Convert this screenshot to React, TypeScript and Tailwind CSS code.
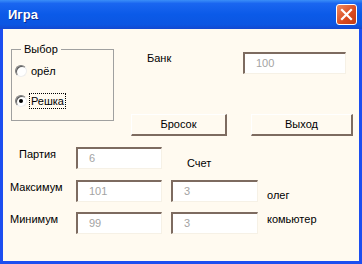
import React from "react";

const font = { fontFamily: '"Liberation Sans", Arial, sans-serif' };

function Field({ value, w }: { value: string; w: string }) {
  return (
    <div
      className={`${w} h-[22px] flex items-center pl-[11px] bg-white border-t-2 border-l-2 border-t-[#7d6b60] border-l-[#7d6b60] border-b border-r border-b-[#f6f1e6] border-r-[#f6f1e6] text-[11px] text-[#a3a3a3]`}
    >
      {value}
    </div>
  );
}

function Btn({ label, w }: { label: string; w: string }) {
  return (
    <button
      className={`${w} h-[22px] flex items-center justify-center bg-[#fffaf0] border-t border-l border-t-white border-l-white border-b-2 border-r-2 border-b-[#7d6b60] border-r-[#7d6b60] text-[11px] text-black`}
    >
      {label}
    </button>
  );
}

function Radio({ checked }: { checked?: boolean }) {
  return (
    <span className="relative w-[12px] h-[12px] rounded-full bg-white border border-t-[#7c7c7c] border-l-[#7c7c7c] border-r-[#eeeeee] border-b-[#eeeeee] shadow-[inset_1px_1px_0_#5a5a5a] flex items-center justify-center">
      {checked && <span className="w-[4px] h-[4px] rounded-full bg-black" />}
    </span>
  );
}

export default function App() {
  return (
    <div className="w-[362px] h-[264px] flex flex-col bg-[#1c4ef0] overflow-hidden" style={font}>
      {/* title bar */}
      <div className="h-[29px] flex items-center justify-between pl-[8px] pr-[5px] bg-[linear-gradient(to_bottom,#3a8ef8_0%,#1a66f0_12%,#0b5ae8_50%,#0c56e2_85%,#1448d0_100%)]">
        <span className="text-white font-bold text-[13px] [text-shadow:1px_1px_0_#0a2a90]">Игра</span>
        <div className="w-[21px] h-[21px] rounded-[3px] border border-white bg-[linear-gradient(135deg,#f08a60,#d8491e_60%,#c23c16)] flex items-center justify-center">
          <svg width="13" height="13" viewBox="0 0 13 13">
            <path d="M2 2 L11 11 M11 2 L2 11" stroke="white" strokeWidth="2.2" strokeLinecap="square" />
          </svg>
        </div>
      </div>

      {/* client */}
      <div className="flex-1 mx-[3px] mb-[3px] bg-[#fffaf0] text-[11px] leading-[13px] text-black">
        <div className="flex items-start">
          <fieldset className="ml-[8px] mt-[14px] w-[103px] h-[78px] border border-[#a0a0a0]">
            <legend className="ml-[9px] px-[3px] leading-[13px]">Выбор</legend>
            <div className="mt-[7px] h-[16px] flex items-center pl-[3px]">
              <Radio />
              <span className="ml-[4px]">орёл</span>
            </div>
            <div className="mt-[14px] h-[16px] flex items-center pl-[3px]">
              <Radio checked />
              <span className="ml-[2px] px-[1px] h-[16px] flex items-center border border-dotted border-black">Решка</span>
            </div>
          </fieldset>

          <div className="ml-[17px] flex flex-col">
            <div className="mt-[23px] flex items-start">
              <span className="w-[112px] pl-[16px]">Банк</span>
              <Field value="100" w="w-[103px]" />
            </div>
            <div className="mt-[40px] flex">
              <Btn label="Бросок" w="w-[96px]" />
              <Btn label="Выход" w="ml-[24px] w-[102px]" />
            </div>
          </div>
        </div>

        <div className="mt-[11px] flex flex-col gap-[10px]">
          <div className="flex items-start">
            <span className="w-[73px] pl-[16px] mt-[1px]">Партия</span>
            <Field value="6" w="w-[86px]" />
            <span className="ml-[25px] mt-[10px]">Счет</span>
          </div>
          <div className="flex items-start">
            <span className="w-[73px] pl-[7px] mt-[1px]">Максимум</span>
            <Field value="101" w="w-[86px]" />
            <div className="ml-[9px]">
              <Field value="3" w="w-[87px]" />
            </div>
            <span className="ml-[9px] mt-[9px]">олег</span>
          </div>
          <div className="flex items-start">
            <span className="w-[73px] pl-[7px] mt-[1px]">Минимум</span>
            <Field value="99" w="w-[86px]" />
            <div className="ml-[9px]">
              <Field value="3" w="w-[87px]" />
            </div>
            <span className="ml-[9px] mt-[1px]">комьютер</span>
          </div>
        </div>
      </div>
    </div>
  );
}
